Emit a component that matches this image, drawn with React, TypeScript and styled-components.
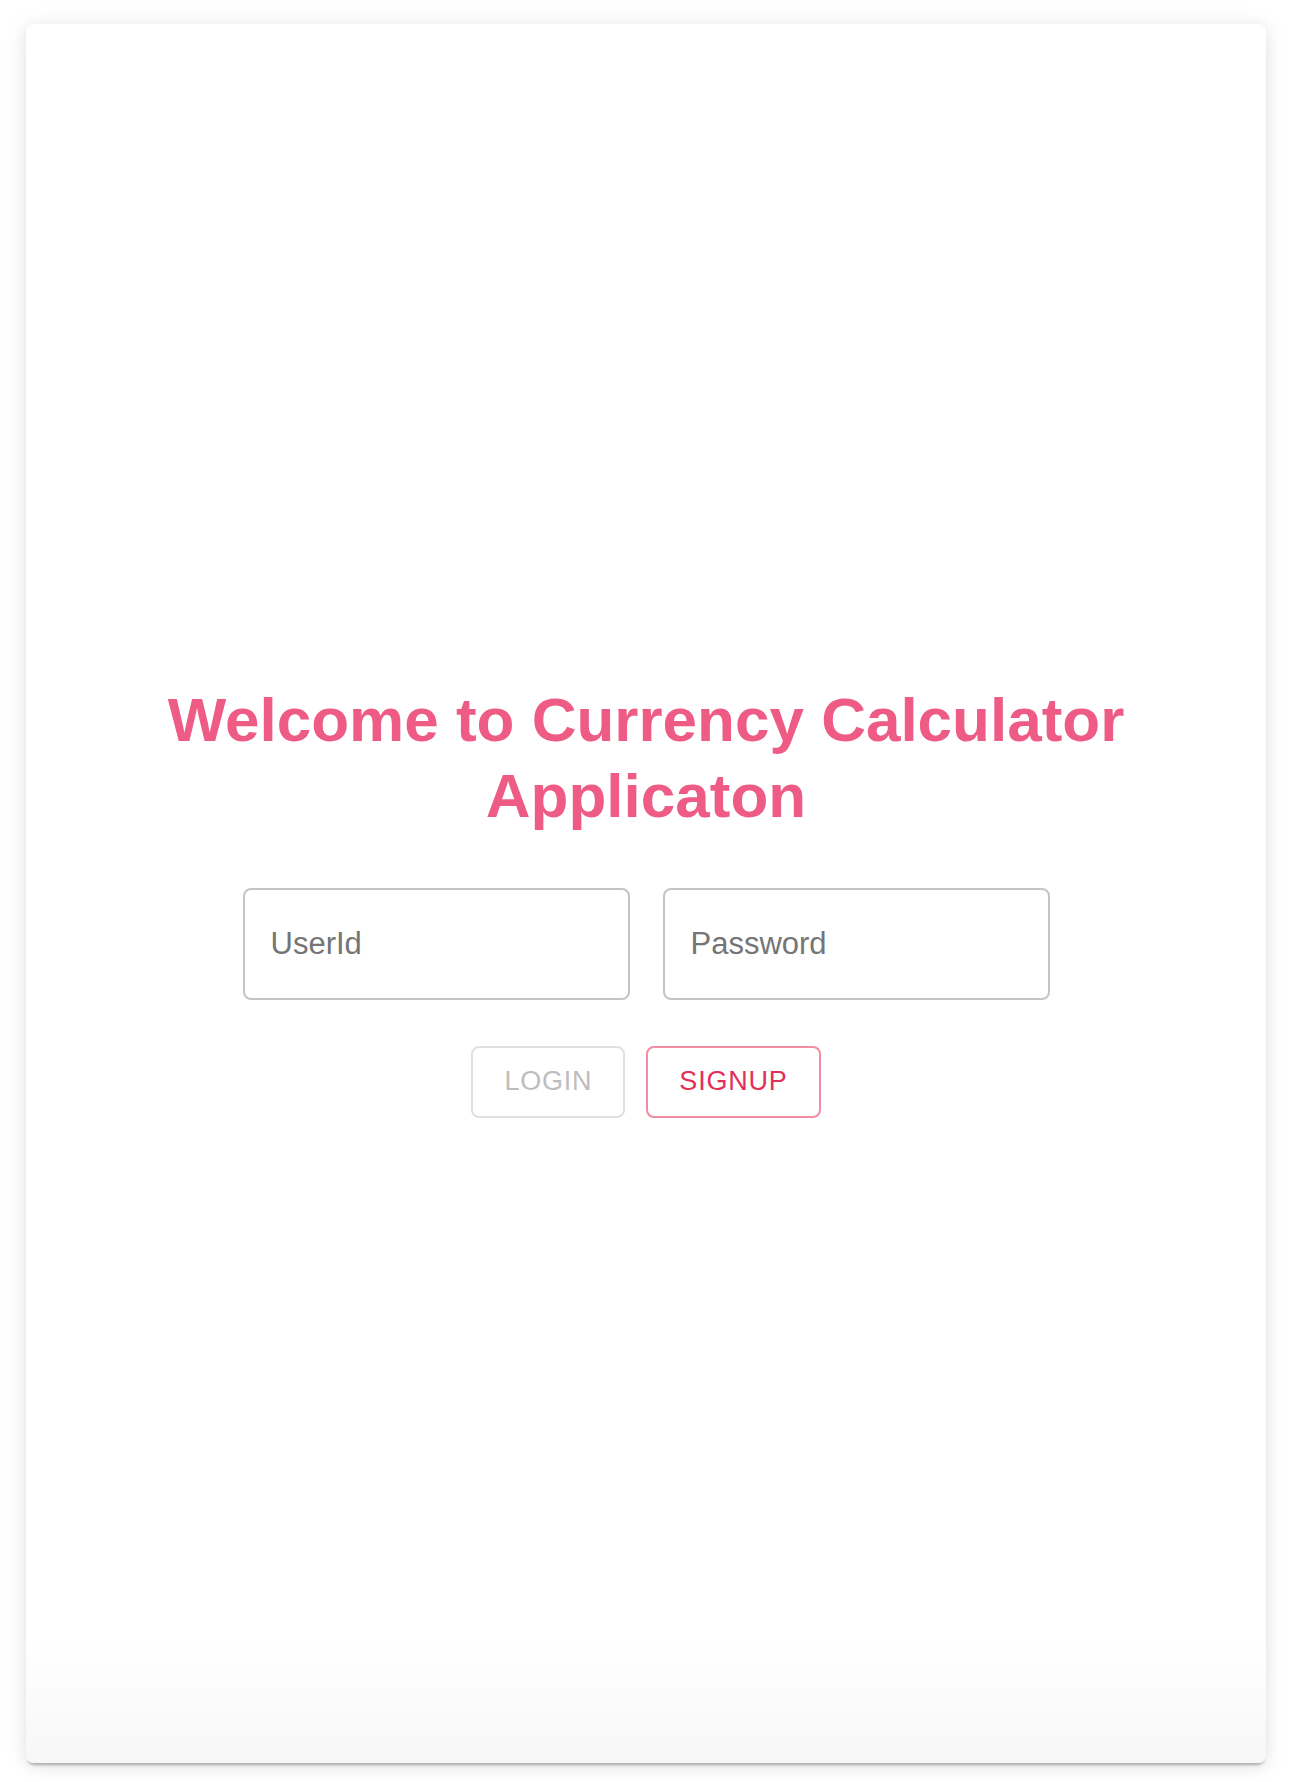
import React from "react";
import styled, { createGlobalStyle } from "styled-components";

const GlobalStyle = createGlobalStyle`
  html, body {
    margin: 0;
    padding: 0;
    background: #ffffff;
    font-family: "Liberation Sans", Arial, sans-serif;
  }
  * { box-sizing: border-box; }
`;

const Page = styled.div`
  width: 1294px;
  height: 1782px;
  padding: 24px 28px 19px 26px;
  display: flex;
`;

const Card = styled.main`
  flex: 1;
  border-radius: 8px;
  background: linear-gradient(to bottom, #ffffff 0%, #ffffff 93%, #f7f7f7 100%);
  box-shadow:
    0 4px 3px -2px rgba(0, 0, 0, 0.28),
    0 3px 14px 0 rgba(0, 0, 0, 0.08),
    0 2px 26px 2px rgba(0, 0, 0, 0.05);
  display: flex;
  flex-direction: column;
  align-items: center;
  justify-content: center;
  padding-top: 12px;
`;

const Title = styled.h1`
  margin: 0;
  width: 1000px;
  text-align: center;
  font-family: "Liberation Sans", Arial, sans-serif;
  font-weight: 700;
  font-size: 62px;
  line-height: 76px;
  letter-spacing: 0px;
  color: #ee5c86;
`;

const FieldRow = styled.div`
  display: flex;
  gap: 33px;
  margin-top: 54px;
`;

const Field = styled.input`
  width: 387px;
  height: 112px;
  border: 2px solid #c4c4c4;
  border-radius: 8px;
  padding: 0 26px;
  font-family: "Liberation Sans", Arial, sans-serif;
  font-size: 31px;
  color: #333;
  background: transparent;
  outline: none;
  &::placeholder {
    color: #757575;
  }
`;

const ButtonRow = styled.div`
  display: flex;
  gap: 21px;
  margin-top: 46px;
`;

const Button = styled.button<{ $variant: "disabled" | "secondary" }>`
  height: 72px;
  padding: 0 31px;
  border-radius: 8px;
  background: transparent;
  font-family: "Liberation Sans", Arial, sans-serif;
  font-size: 27px;
  letter-spacing: 0.77px;
  text-transform: uppercase;
  border: 2px solid ${(p) => (p.$variant === "secondary" ? "#f08da2" : "#e0e0e0")};
  color: ${(p) => (p.$variant === "secondary" ? "#e2305b" : "#bdbdbd")};
  cursor: ${(p) => (p.$variant === "secondary" ? "pointer" : "default")};
`;

export default function App() {
  return (
    <>
      <GlobalStyle />
      <Page>
        <Card>
          <Title>Welcome to Currency Calculator Applicaton</Title>
          <FieldRow>
            <Field placeholder="UserId" />
            <Field placeholder="Password" type="password" />
          </FieldRow>
          <ButtonRow>
            <Button $variant="disabled" disabled>
              Login
            </Button>
            <Button $variant="secondary">Signup</Button>
          </ButtonRow>
        </Card>
      </Page>
    </>
  );
}
